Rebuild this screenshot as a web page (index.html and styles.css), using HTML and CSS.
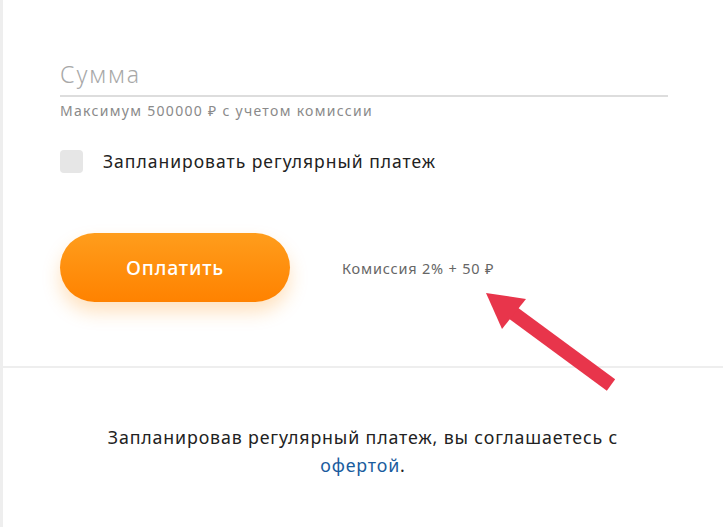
FILE: index.html
```html
<!DOCTYPE html>
<html lang="ru">
<head>
    <meta charset="UTF-8">
    <meta name="viewport" content="width=device-width, initial-scale=1.0">
    <title>Оплата</title>
    <link rel="stylesheet" href="styles.css">
</head>
<body>
    <div class="page">
        <div class="payForm">
            <div class="amountField">
                <div class="amountInput">Сумма</div>
            </div>
            <div class="amountHint">Максимум 500000 ₽ с учетом комиссии</div>
            <label class="regular">
                <span class="checkBox"></span>
                <span class="regularText">Запланировать регулярный платеж</span>
            </label>
            <div class="payRow">
                <button class="btnPay">Оплатить</button>
                <div class="fee">Комиссия 2% + 50 ₽</div>
            </div>
        </div>
        <div class="offer">
            Запланировав регулярный платеж, вы соглашаетесь с<br>
            <a href="#" class="offerLink">офертой</a>.
        </div>

        <svg class="arrow" width="723" height="527" viewBox="0 0 723 527">
            <line x1="505" y1="307" x2="611" y2="385" stroke="#e8354b" stroke-width="14"/>
            <polygon points="486,293 526,299 502,329" fill="#e8354b"/>
        </svg>
    </div>
</body>
</html>
```

FILE: styles.css
```css
* {
    margin: 0;
    padding: 0;
    box-sizing: border-box;
    font-family: 'Noto Sans', 'Open Sans', sans-serif;
}
body {
    background: #fff;
}
.page {
    position: relative;
    height: 527px;
    border-left: 3px solid #eeeeee;
    overflow: hidden;
}
.payForm {
    padding: 56px 55px 0 57px;
    height: 368px;
    border-bottom: 2px solid #eeeeee;
}
.amountField {
    border-bottom: 2px solid #dddddd;
    height: 41px;
}
.amountInput {
    font-size: 23px;
    line-height: 36px;
    letter-spacing: 1.8px;
    color: #a8a8a8;
    font-weight: 300;
}
.amountHint {
    margin-top: 4px;
    font-size: 14px;
    line-height: 20px;
    letter-spacing: 1.3px;
    color: #8a8a8a;
}
.regular {
    display: flex;
    align-items: center;
    margin-top: 28px;
}
.checkBox {
    width: 23px;
    height: 23px;
    border-radius: 4px;
    background: #e6e6e6;
    margin-right: 20px;
}
.regularText {
    font-size: 17.5px;
    letter-spacing: 1px;
    color: #222;
}
.payRow {
    display: flex;
    align-items: center;
    margin-top: 60px;
}
.btnPay {
    width: 230px;
    height: 69px;
    border: none;
    outline: none;
    border-radius: 35px;
    background: linear-gradient(#ff9d1c, #ff8200);
    box-shadow: 0 10px 18px rgba(255, 150, 30, 0.28);
    color: #fff;
    font-size: 19.5px;
    font-weight: 500;
    letter-spacing: 0.8px;
    cursor: pointer;
}
.fee {
    margin-left: 52px;
    font-size: 14.5px;
    letter-spacing: 0.8px;
    color: #666;
}
.offer {
    padding-top: 55px;
    text-align: center;
    font-size: 17.8px;
    line-height: 28px;
    letter-spacing: 0.85px;
    color: #222;
}
.offerLink {
    color: #1a5c9e;
    text-decoration: none;
}
.arrow {
    position: absolute;
    left: -3px;
    top: 0;
    pointer-events: none;
}
```
